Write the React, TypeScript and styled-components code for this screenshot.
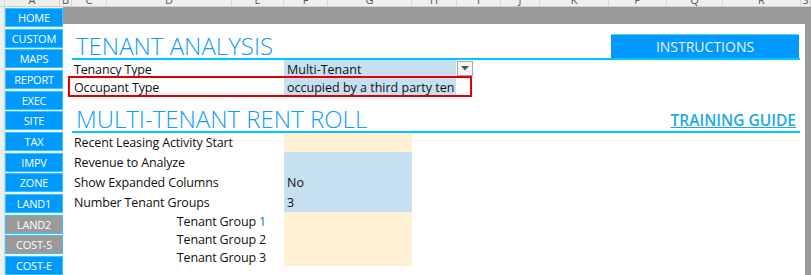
import React from "react";
import styled, { createGlobalStyle } from "styled-components";

const Global = createGlobalStyle`
  html, body { margin: 0; padding: 0; background: #ffffff; overflow: hidden; }
  body { font-family: "Open Sans", "Noto Sans", sans-serif; }
  #root { width: 811px; height: 275px; }
`;

const Frame = styled.div`
  width: 811px;
  height: 275px;
  display: flex;
  flex-direction: column;
  overflow: hidden;
`;

const HeaderRow = styled.div`
  display: flex;
  flex: none;
  height: 7px;
  background: #efefef;
  border-bottom: 1px solid #cfcfcf;
  box-sizing: border-box;
  overflow: hidden;
`;

const HeaderCell = styled.div<{ $w: number }>`
  width: ${(p) => p.$w}px;
  flex: none;
  box-sizing: border-box;
  border-right: 1px solid #d6d6d6;
  text-align: center;
  font-family: "Open Sans", sans-serif;
  font-size: 11px;
  line-height: 11px;
  color: #555;
  overflow: hidden;
  span {
    display: block;
    margin-top: -6px;
  }
`;

const Body = styled.div`
  flex: 1;
  display: flex;
  min-height: 0;
`;

const Sidebar = styled.div`
  width: 63px;
  flex: none;
  display: flex;
  background: #f4f4f4;
`;

const RowHeads = styled.div`
  width: 5px;
  flex: none;
  background: #eeeeee;
  border-right: 1px solid #d8d8d8;
  box-sizing: border-box;
`;

const NavList = styled.div`
  width: 58px;
  display: flex;
  flex-direction: column;
  gap: 1.67px;
  padding-top: 1px;
`;

const NavButton = styled.div<{ $off?: boolean }>`
  height: 19px;
  flex: none;
  box-sizing: border-box;
  border: 1px solid #2ec8ff;
  background: ${(p) => (p.$off ? "#9a9a9a" : "#0099ff")};
  color: #ffffff;
  font-family: "Open Sans", sans-serif;
  font-size: 11px;
  display: flex;
  align-items: center;
  justify-content: center;
  letter-spacing: -0.2px;
`;

const Main = styled.div`
  flex: 1;
  display: flex;
  flex-direction: column;
  min-width: 0;
`;

const GreyBand = styled.div`
  height: 17px;
  flex: none;
  background: #9a9a9a;
`;

const SheetWrap = styled.div`
  flex: 1;
  display: flex;
`;

const RightStrip = styled.div`
  width: 6px;
  flex: none;
  background: #9a9a9a;
`;

const Sheet = styled.div`
  flex: 1;
  background: #ffffff;
  padding-top: 10px;
  display: flex;
  flex-direction: column;
`;

const TitleRow = styled.div<{ $gap?: number }>`
  margin: ${(p) => p.$gap ?? 0}px 5px 0 9px;
  height: 26px;
  box-sizing: border-box;
  border-bottom: 2px solid #00c8ff;
  display: flex;
  align-items: flex-end;
  justify-content: space-between;
`;

const Title = styled.div`
  padding-left: 4px;
  font-family: "Open Sans", sans-serif;
  font-weight: 300;
  font-size: 24px;
  line-height: 24px;
  color: #0f9bff;
  white-space: nowrap;
`;

const InstructionsButton = styled.div`
  width: 188px;
  height: 24px;
  margin-right: 1px;
  box-sizing: border-box;
  background: #0099ff;
  border-top: 1px solid #4fd2ff;
  color: #f0f4ff;
  font-family: "Open Sans", sans-serif;
  font-size: 14px;
  display: flex;
  align-items: center;
  justify-content: center;
`;

const GuideLink = styled.a`
  margin-right: 4px;
  margin-bottom: 2px;
  font-family: "Open Sans", sans-serif;
  font-weight: 600;
  font-size: 15.5px;
  line-height: 18px;
  color: #1aaae6;
  text-decoration: underline;
  text-underline-offset: 1px;
  white-space: nowrap;
`;

const FormRow = styled.div<{ $h: number }>`
  display: flex;
  height: ${(p) => p.$h}px;
  position: relative;
`;

const Label = styled.div<{ $right?: boolean }>`
  width: 221px;
  flex: none;
  box-sizing: border-box;
  padding-left: ${(p) => (p.$right ? 0 : 11)}px;
  padding-right: ${(p) => (p.$right ? 18 : 0)}px;
  display: flex;
  align-items: center;
  justify-content: ${(p) => (p.$right ? "flex-end" : "flex-start")};
  font-family: "Open Sans", sans-serif;
  font-size: 12.5px;
  letter-spacing: -0.15px;
  color: #111;
  white-space: nowrap;
`;

const Num = styled.span<{ $blue?: boolean }>`
  color: ${(p) => (p.$blue ? "#1f6fc0" : "inherit")};
`;

const ValueCell = styled.div<{ $w: number; $tone: "blue" | "cream" }>`
  width: ${(p) => p.$w}px;
  flex: none;
  box-sizing: border-box;
  padding-left: 3px;
  background: ${(p) => (p.$tone === "blue" ? "#c6e0f1" : "#fff0d4")};
  display: flex;
  align-items: center;
  font-family: "Open Sans", sans-serif;
  font-size: 12.5px;
  color: #111;
  white-space: nowrap;
  overflow: hidden;
`;

const DropButton = styled.div`
  width: 16px;
  height: 15px;
  margin: 1px 0 0 1px;
  box-sizing: border-box;
  border: 1px solid #a9a9a9;
  background: #f8f8f8;
  display: flex;
  align-items: center;
  justify-content: center;
`;

const Highlight = styled.div`
  position: absolute;
  left: 5px;
  top: -2px;
  width: 404px;
  height: 21px;
  box-sizing: border-box;
  border: 2px solid #e00000;
  pointer-events: none;
`;

const columns: [string, number][] = [
  ["", 5],
  ["A", 55],
  ["B", 12],
  ["C", 35],
  ["D", 125],
  ["E", 52],
  ["F", 44],
  ["G", 84],
  ["H", 45],
  ["I", 44],
  ["J", 39],
  ["K", 69],
  ["P", 58],
  ["Q", 56],
  ["R", 78],
  ["S", 10],
];

const nav: [string, boolean][] = [
  ["HOME", false],
  ["CUSTOM", false],
  ["MAPS", false],
  ["REPORT", false],
  ["EXEC", false],
  ["SITE", false],
  ["TAX", false],
  ["IMPV", false],
  ["ZONE", false],
  ["LAND1", false],
  ["LAND2", true],
  ["COST-S", true],
  ["COST-E", false],
];

type Row = {
  label: React.ReactNode;
  value?: string;
  tone: "blue" | "cream";
  h: number;
  right?: boolean;
};

const rentRows: Row[] = [
  { label: "Recent Leasing Activity Start", tone: "cream", h: 19 },
  { label: "Revenue to Analyze", tone: "blue", h: 20 },
  { label: "Show Expanded Columns", value: "No", tone: "blue", h: 20 },
  { label: "Number Tenant Groups", value: "3", tone: "blue", h: 20 },
  {
    label: (
      <>
        Tenant Group&nbsp;<Num $blue>1</Num>
      </>
    ),
    tone: "cream",
    h: 18,
    right: true,
  },
  {
    label: (
      <>
        Tenant Group&nbsp;<Num>2</Num>
      </>
    ),
    tone: "cream",
    h: 18,
    right: true,
  },
  {
    label: (
      <>
        Tenant Group&nbsp;<Num>3</Num>
      </>
    ),
    tone: "cream",
    h: 18,
    right: true,
  },
];

export default function App() {
  return (
    <>
      <Global />
      <Frame>
        <HeaderRow>
          {columns.map(([l, w], i) => (
            <HeaderCell key={i} $w={w}>
              <span>{l}</span>
            </HeaderCell>
          ))}
        </HeaderRow>
        <Body>
          <Sidebar>
            <RowHeads />
            <NavList>
              {nav.map(([n, off]) => (
                <NavButton key={n} $off={off}>
                  {n}
                </NavButton>
              ))}
            </NavList>
          </Sidebar>
          <Main>
            <GreyBand />
            <SheetWrap>
              <Sheet>
                <TitleRow>
                  <Title>TENANT ANALYSIS</Title>
                  <InstructionsButton>INSTRUCTIONS</InstructionsButton>
                </TitleRow>
                <FormRow $h={18}>
                  <Label>Tenancy Type</Label>
                  <ValueCell $w={172} $tone="blue">
                    Multi-Tenant
                  </ValueCell>
                  <DropButton>
                    <svg width="8" height="5" viewBox="0 0 8 5">
                      <path d="M0 0 L8 0 L4 4.5 Z" fill="#555" />
                    </svg>
                  </DropButton>
                </FormRow>
                <FormRow $h={18}>
                  <Label>Occupant Type</Label>
                  <ValueCell $w={172} $tone="blue">
                    occupied by a third party ten
                  </ValueCell>
                  <Highlight />
                </FormRow>
                <TitleRow $gap={11}>
                  <Title>MULTI-TENANT RENT ROLL</Title>
                  <GuideLink>TRAINING GUIDE</GuideLink>
                </TitleRow>
                {rentRows.map((r, i) => (
                  <FormRow key={i} $h={r.h}>
                    <Label $right={r.right}>{r.label}</Label>
                    <ValueCell $w={128} $tone={r.tone}>
                      {r.value}
                    </ValueCell>
                  </FormRow>
                ))}
              </Sheet>
              <RightStrip />
            </SheetWrap>
          </Main>
        </Body>
      </Frame>
    </>
  );
}
